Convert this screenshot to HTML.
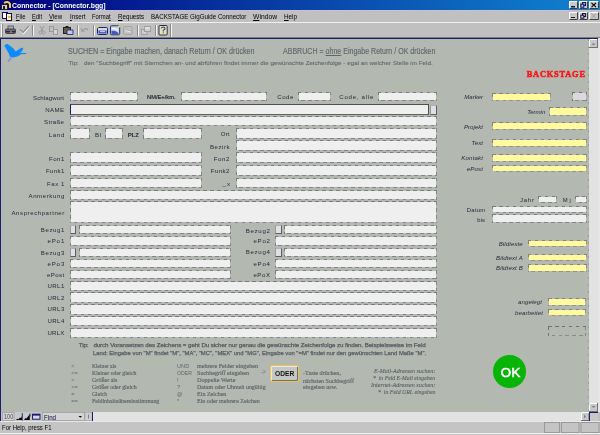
<!DOCTYPE html>
<html><head><meta charset="utf-8"><style>
html,body{margin:0;padding:0;width:600px;height:435px;overflow:hidden;background:#c0c0c0}
#w div{position:absolute}
#w{position:absolute;left:0;top:0;width:600px;height:435px;overflow:hidden;filter:blur(0.3px)}
u{text-underline-offset:0.5px}
</style></head><body><div id="w">
<div style="left:0px;top:0px;width:600px;height:435px;background:#c0c0c0"></div>
<div style="left:0px;top:0px;width:600px;height:10px;background:linear-gradient(90deg,#000080,#1084d0)"></div>
<div style="left:0px;top:10px;width:600px;height:1px;background:#c8c0d8"></div>
<div style="left:0px;top:22px;width:600px;height:1px;background:#f0f0f0"></div>
<div style="left:0px;top:37px;width:600px;height:1px;background:#808080"></div>
<div style="left:0px;top:38px;width:599px;height:1px;background:#1c1c6c"></div>
<div style="left:0px;top:38px;width:1px;height:383px;background:#1c1c6c"></div>
<div style="left:1px;top:39px;width:588px;height:373px;background:#b3b9b1"></div>
<div style="left:589px;top:39px;width:9px;height:373px;background:#e2e2e2"></div>
<div style="left:588px;top:39px;width:1px;height:373px;background:repeating-linear-gradient(180deg,#9a9e98 0 2px,transparent 2px 7px)"></div>
<div style="left:598px;top:38px;width:2px;height:374px;background:#e6e6e6"></div>
<div style="left:70px;top:92px;width:68px;height:9px;background:repeating-linear-gradient(90deg,#7a7a82 0 3.5px,transparent 3.5px 7px) 0 0/100% 1px no-repeat,repeating-linear-gradient(90deg,transparent 0 3.5px,#84848a 3.5px 7px) 0 100%/100% 1px no-repeat,repeating-linear-gradient(180deg,#7a7a82 0 3.5px,transparent 3.5px 7px) 0 0/1px 100% no-repeat,repeating-linear-gradient(180deg,#84848a 0 3.5px,transparent 3.5px 7px) 100% 0/1px 100% no-repeat,linear-gradient(#efefef,#efefef) 1px 1px/calc(100% - 2px) calc(100% - 2px) no-repeat"></div>
<div style="left:181px;top:92px;width:86px;height:9px;background:repeating-linear-gradient(90deg,#7a7a82 0 3.5px,transparent 3.5px 7px) 0 0/100% 1px no-repeat,repeating-linear-gradient(90deg,transparent 0 3.5px,#84848a 3.5px 7px) 0 100%/100% 1px no-repeat,repeating-linear-gradient(180deg,#7a7a82 0 3.5px,transparent 3.5px 7px) 0 0/1px 100% no-repeat,repeating-linear-gradient(180deg,#84848a 0 3.5px,transparent 3.5px 7px) 100% 0/1px 100% no-repeat,linear-gradient(#efefef,#efefef) 1px 1px/calc(100% - 2px) calc(100% - 2px) no-repeat"></div>
<div style="left:298px;top:92px;width:33px;height:9px;background:repeating-linear-gradient(90deg,#7a7a82 0 3.5px,transparent 3.5px 7px) 0 0/100% 1px no-repeat,repeating-linear-gradient(90deg,transparent 0 3.5px,#84848a 3.5px 7px) 0 100%/100% 1px no-repeat,repeating-linear-gradient(180deg,#7a7a82 0 3.5px,transparent 3.5px 7px) 0 0/1px 100% no-repeat,repeating-linear-gradient(180deg,#84848a 0 3.5px,transparent 3.5px 7px) 100% 0/1px 100% no-repeat,linear-gradient(#efefef,#efefef) 1px 1px/calc(100% - 2px) calc(100% - 2px) no-repeat"></div>
<div style="left:378px;top:92px;width:59px;height:9px;background:repeating-linear-gradient(90deg,#7a7a82 0 3.5px,transparent 3.5px 7px) 0 0/100% 1px no-repeat,repeating-linear-gradient(90deg,transparent 0 3.5px,#84848a 3.5px 7px) 0 100%/100% 1px no-repeat,repeating-linear-gradient(180deg,#7a7a82 0 3.5px,transparent 3.5px 7px) 0 0/1px 100% no-repeat,repeating-linear-gradient(180deg,#84848a 0 3.5px,transparent 3.5px 7px) 100% 0/1px 100% no-repeat,linear-gradient(#efefef,#efefef) 1px 1px/calc(100% - 2px) calc(100% - 2px) no-repeat"></div>
<div style="left:70px;top:104px;width:359px;height:11px;background:#efefef;border-top:1px solid #505050;border-left:1px solid #1a1a6a;border-bottom:1px solid #606060;border-right:1px solid #505050;box-sizing:border-box"></div>
<div style="left:430px;top:105px;width:7px;height:10px;background:#e2dee8;border-top:1px solid #b0b0b0;border-left:1px solid #9a9a9a;border-bottom:1px solid #606060;border-right:1px solid #606060;box-sizing:border-box"></div>
<div style="left:70px;top:116px;width:367px;height:10px;background:repeating-linear-gradient(90deg,#7a7a82 0 3.5px,transparent 3.5px 7px) 0 0/100% 1px no-repeat,repeating-linear-gradient(90deg,transparent 0 3.5px,#84848a 3.5px 7px) 0 100%/100% 1px no-repeat,repeating-linear-gradient(180deg,#7a7a82 0 3.5px,transparent 3.5px 7px) 0 0/1px 100% no-repeat,repeating-linear-gradient(180deg,#84848a 0 3.5px,transparent 3.5px 7px) 100% 0/1px 100% no-repeat,linear-gradient(#efefef,#efefef) 1px 1px/calc(100% - 2px) calc(100% - 2px) no-repeat"></div>
<div style="left:70px;top:128px;width:20px;height:11px;background:repeating-linear-gradient(90deg,#7a7a82 0 3.5px,transparent 3.5px 7px) 0 0/100% 1px no-repeat,repeating-linear-gradient(90deg,transparent 0 3.5px,#84848a 3.5px 7px) 0 100%/100% 1px no-repeat,repeating-linear-gradient(180deg,#7a7a82 0 3.5px,transparent 3.5px 7px) 0 0/1px 100% no-repeat,repeating-linear-gradient(180deg,#84848a 0 3.5px,transparent 3.5px 7px) 100% 0/1px 100% no-repeat,linear-gradient(#efefef,#efefef) 1px 1px/calc(100% - 2px) calc(100% - 2px) no-repeat"></div>
<div style="left:105px;top:128px;width:18px;height:11px;background:repeating-linear-gradient(90deg,#7a7a82 0 3.5px,transparent 3.5px 7px) 0 0/100% 1px no-repeat,repeating-linear-gradient(90deg,transparent 0 3.5px,#84848a 3.5px 7px) 0 100%/100% 1px no-repeat,repeating-linear-gradient(180deg,#7a7a82 0 3.5px,transparent 3.5px 7px) 0 0/1px 100% no-repeat,repeating-linear-gradient(180deg,#84848a 0 3.5px,transparent 3.5px 7px) 100% 0/1px 100% no-repeat,linear-gradient(#efefef,#efefef) 1px 1px/calc(100% - 2px) calc(100% - 2px) no-repeat"></div>
<div style="left:143px;top:128px;width:59px;height:11px;background:repeating-linear-gradient(90deg,#7a7a82 0 3.5px,transparent 3.5px 7px) 0 0/100% 1px no-repeat,repeating-linear-gradient(90deg,transparent 0 3.5px,#84848a 3.5px 7px) 0 100%/100% 1px no-repeat,repeating-linear-gradient(180deg,#7a7a82 0 3.5px,transparent 3.5px 7px) 0 0/1px 100% no-repeat,repeating-linear-gradient(180deg,#84848a 0 3.5px,transparent 3.5px 7px) 100% 0/1px 100% no-repeat,linear-gradient(#efefef,#efefef) 1px 1px/calc(100% - 2px) calc(100% - 2px) no-repeat"></div>
<div style="left:236px;top:128px;width:201px;height:11px;background:repeating-linear-gradient(90deg,#7a7a82 0 3.5px,transparent 3.5px 7px) 0 0/100% 1px no-repeat,repeating-linear-gradient(90deg,transparent 0 3.5px,#84848a 3.5px 7px) 0 100%/100% 1px no-repeat,repeating-linear-gradient(180deg,#7a7a82 0 3.5px,transparent 3.5px 7px) 0 0/1px 100% no-repeat,repeating-linear-gradient(180deg,#84848a 0 3.5px,transparent 3.5px 7px) 100% 0/1px 100% no-repeat,linear-gradient(#efefef,#efefef) 1px 1px/calc(100% - 2px) calc(100% - 2px) no-repeat"></div>
<div style="left:236px;top:140px;width:201px;height:11px;background:repeating-linear-gradient(90deg,#7a7a82 0 3.5px,transparent 3.5px 7px) 0 0/100% 1px no-repeat,repeating-linear-gradient(90deg,transparent 0 3.5px,#84848a 3.5px 7px) 0 100%/100% 1px no-repeat,repeating-linear-gradient(180deg,#7a7a82 0 3.5px,transparent 3.5px 7px) 0 0/1px 100% no-repeat,repeating-linear-gradient(180deg,#84848a 0 3.5px,transparent 3.5px 7px) 100% 0/1px 100% no-repeat,linear-gradient(#efefef,#efefef) 1px 1px/calc(100% - 2px) calc(100% - 2px) no-repeat"></div>
<div style="left:70px;top:152px;width:132px;height:11px;background:repeating-linear-gradient(90deg,#7a7a82 0 3.5px,transparent 3.5px 7px) 0 0/100% 1px no-repeat,repeating-linear-gradient(90deg,transparent 0 3.5px,#84848a 3.5px 7px) 0 100%/100% 1px no-repeat,repeating-linear-gradient(180deg,#7a7a82 0 3.5px,transparent 3.5px 7px) 0 0/1px 100% no-repeat,repeating-linear-gradient(180deg,#84848a 0 3.5px,transparent 3.5px 7px) 100% 0/1px 100% no-repeat,linear-gradient(#efefef,#efefef) 1px 1px/calc(100% - 2px) calc(100% - 2px) no-repeat"></div>
<div style="left:236px;top:152px;width:201px;height:11px;background:repeating-linear-gradient(90deg,#7a7a82 0 3.5px,transparent 3.5px 7px) 0 0/100% 1px no-repeat,repeating-linear-gradient(90deg,transparent 0 3.5px,#84848a 3.5px 7px) 0 100%/100% 1px no-repeat,repeating-linear-gradient(180deg,#7a7a82 0 3.5px,transparent 3.5px 7px) 0 0/1px 100% no-repeat,repeating-linear-gradient(180deg,#84848a 0 3.5px,transparent 3.5px 7px) 100% 0/1px 100% no-repeat,linear-gradient(#efefef,#efefef) 1px 1px/calc(100% - 2px) calc(100% - 2px) no-repeat"></div>
<div style="left:70px;top:165px;width:132px;height:11px;background:repeating-linear-gradient(90deg,#7a7a82 0 3.5px,transparent 3.5px 7px) 0 0/100% 1px no-repeat,repeating-linear-gradient(90deg,transparent 0 3.5px,#84848a 3.5px 7px) 0 100%/100% 1px no-repeat,repeating-linear-gradient(180deg,#7a7a82 0 3.5px,transparent 3.5px 7px) 0 0/1px 100% no-repeat,repeating-linear-gradient(180deg,#84848a 0 3.5px,transparent 3.5px 7px) 100% 0/1px 100% no-repeat,linear-gradient(#efefef,#efefef) 1px 1px/calc(100% - 2px) calc(100% - 2px) no-repeat"></div>
<div style="left:236px;top:165px;width:201px;height:11px;background:repeating-linear-gradient(90deg,#7a7a82 0 3.5px,transparent 3.5px 7px) 0 0/100% 1px no-repeat,repeating-linear-gradient(90deg,transparent 0 3.5px,#84848a 3.5px 7px) 0 100%/100% 1px no-repeat,repeating-linear-gradient(180deg,#7a7a82 0 3.5px,transparent 3.5px 7px) 0 0/1px 100% no-repeat,repeating-linear-gradient(180deg,#84848a 0 3.5px,transparent 3.5px 7px) 100% 0/1px 100% no-repeat,linear-gradient(#efefef,#efefef) 1px 1px/calc(100% - 2px) calc(100% - 2px) no-repeat"></div>
<div style="left:70px;top:178px;width:132px;height:10px;background:repeating-linear-gradient(90deg,#7a7a82 0 3.5px,transparent 3.5px 7px) 0 0/100% 1px no-repeat,repeating-linear-gradient(90deg,transparent 0 3.5px,#84848a 3.5px 7px) 0 100%/100% 1px no-repeat,repeating-linear-gradient(180deg,#7a7a82 0 3.5px,transparent 3.5px 7px) 0 0/1px 100% no-repeat,repeating-linear-gradient(180deg,#84848a 0 3.5px,transparent 3.5px 7px) 100% 0/1px 100% no-repeat,linear-gradient(#efefef,#efefef) 1px 1px/calc(100% - 2px) calc(100% - 2px) no-repeat"></div>
<div style="left:236px;top:178px;width:201px;height:10px;background:repeating-linear-gradient(90deg,#7a7a82 0 3.5px,transparent 3.5px 7px) 0 0/100% 1px no-repeat,repeating-linear-gradient(90deg,transparent 0 3.5px,#84848a 3.5px 7px) 0 100%/100% 1px no-repeat,repeating-linear-gradient(180deg,#7a7a82 0 3.5px,transparent 3.5px 7px) 0 0/1px 100% no-repeat,repeating-linear-gradient(180deg,#84848a 0 3.5px,transparent 3.5px 7px) 100% 0/1px 100% no-repeat,linear-gradient(#efefef,#efefef) 1px 1px/calc(100% - 2px) calc(100% - 2px) no-repeat"></div>
<div style="left:70px;top:190px;width:367px;height:10px;background:repeating-linear-gradient(90deg,#7a7a82 0 3.5px,transparent 3.5px 7px) 0 0/100% 1px no-repeat,repeating-linear-gradient(90deg,transparent 0 3.5px,#84848a 3.5px 7px) 0 100%/100% 1px no-repeat,repeating-linear-gradient(180deg,#7a7a82 0 3.5px,transparent 3.5px 7px) 0 0/1px 100% no-repeat,repeating-linear-gradient(180deg,#84848a 0 3.5px,transparent 3.5px 7px) 100% 0/1px 100% no-repeat,linear-gradient(#efefef,#efefef) 1px 1px/calc(100% - 2px) calc(100% - 2px) no-repeat"></div>
<div style="left:70px;top:201px;width:367px;height:22px;background:repeating-linear-gradient(90deg,#7a7a82 0 3.5px,transparent 3.5px 7px) 0 0/100% 1px no-repeat,repeating-linear-gradient(90deg,transparent 0 3.5px,#84848a 3.5px 7px) 0 100%/100% 1px no-repeat,repeating-linear-gradient(180deg,#7a7a82 0 3.5px,transparent 3.5px 7px) 0 0/1px 100% no-repeat,repeating-linear-gradient(180deg,#84848a 0 3.5px,transparent 3.5px 7px) 100% 0/1px 100% no-repeat,linear-gradient(#efefef,#efefef) 1px 1px/calc(100% - 2px) calc(100% - 2px) no-repeat"></div>
<div style="left:70px;top:225px;width:6px;height:9px;background:#e2dee8;border-top:1px solid #b0b0b0;border-left:1px solid #9a9a9a;border-bottom:1px solid #606060;border-right:1px solid #606060;box-sizing:border-box"></div>
<div style="left:79px;top:225px;width:152px;height:9px;background:repeating-linear-gradient(90deg,#7a7a82 0 3.5px,transparent 3.5px 7px) 0 0/100% 1px no-repeat,repeating-linear-gradient(90deg,transparent 0 3.5px,#84848a 3.5px 7px) 0 100%/100% 1px no-repeat,repeating-linear-gradient(180deg,#7a7a82 0 3.5px,transparent 3.5px 7px) 0 0/1px 100% no-repeat,repeating-linear-gradient(180deg,#84848a 0 3.5px,transparent 3.5px 7px) 100% 0/1px 100% no-repeat,linear-gradient(#efefef,#efefef) 1px 1px/calc(100% - 2px) calc(100% - 2px) no-repeat"></div>
<div style="left:275px;top:225px;width:7px;height:9px;background:#e2dee8;border-top:1px solid #b0b0b0;border-left:1px solid #9a9a9a;border-bottom:1px solid #606060;border-right:1px solid #606060;box-sizing:border-box"></div>
<div style="left:284px;top:225px;width:153px;height:9px;background:repeating-linear-gradient(90deg,#7a7a82 0 3.5px,transparent 3.5px 7px) 0 0/100% 1px no-repeat,repeating-linear-gradient(90deg,transparent 0 3.5px,#84848a 3.5px 7px) 0 100%/100% 1px no-repeat,repeating-linear-gradient(180deg,#7a7a82 0 3.5px,transparent 3.5px 7px) 0 0/1px 100% no-repeat,repeating-linear-gradient(180deg,#84848a 0 3.5px,transparent 3.5px 7px) 100% 0/1px 100% no-repeat,linear-gradient(#efefef,#efefef) 1px 1px/calc(100% - 2px) calc(100% - 2px) no-repeat"></div>
<div style="left:70px;top:248px;width:6px;height:9px;background:#e2dee8;border-top:1px solid #b0b0b0;border-left:1px solid #9a9a9a;border-bottom:1px solid #606060;border-right:1px solid #606060;box-sizing:border-box"></div>
<div style="left:79px;top:248px;width:152px;height:9px;background:repeating-linear-gradient(90deg,#7a7a82 0 3.5px,transparent 3.5px 7px) 0 0/100% 1px no-repeat,repeating-linear-gradient(90deg,transparent 0 3.5px,#84848a 3.5px 7px) 0 100%/100% 1px no-repeat,repeating-linear-gradient(180deg,#7a7a82 0 3.5px,transparent 3.5px 7px) 0 0/1px 100% no-repeat,repeating-linear-gradient(180deg,#84848a 0 3.5px,transparent 3.5px 7px) 100% 0/1px 100% no-repeat,linear-gradient(#efefef,#efefef) 1px 1px/calc(100% - 2px) calc(100% - 2px) no-repeat"></div>
<div style="left:275px;top:248px;width:7px;height:9px;background:#e2dee8;border-top:1px solid #b0b0b0;border-left:1px solid #9a9a9a;border-bottom:1px solid #606060;border-right:1px solid #606060;box-sizing:border-box"></div>
<div style="left:284px;top:248px;width:153px;height:9px;background:repeating-linear-gradient(90deg,#7a7a82 0 3.5px,transparent 3.5px 7px) 0 0/100% 1px no-repeat,repeating-linear-gradient(90deg,transparent 0 3.5px,#84848a 3.5px 7px) 0 100%/100% 1px no-repeat,repeating-linear-gradient(180deg,#7a7a82 0 3.5px,transparent 3.5px 7px) 0 0/1px 100% no-repeat,repeating-linear-gradient(180deg,#84848a 0 3.5px,transparent 3.5px 7px) 100% 0/1px 100% no-repeat,linear-gradient(#efefef,#efefef) 1px 1px/calc(100% - 2px) calc(100% - 2px) no-repeat"></div>
<div style="left:70px;top:236px;width:161px;height:10px;background:repeating-linear-gradient(90deg,#7a7a82 0 3.5px,transparent 3.5px 7px) 0 0/100% 1px no-repeat,repeating-linear-gradient(90deg,transparent 0 3.5px,#84848a 3.5px 7px) 0 100%/100% 1px no-repeat,repeating-linear-gradient(180deg,#7a7a82 0 3.5px,transparent 3.5px 7px) 0 0/1px 100% no-repeat,repeating-linear-gradient(180deg,#84848a 0 3.5px,transparent 3.5px 7px) 100% 0/1px 100% no-repeat,linear-gradient(#efefef,#efefef) 1px 1px/calc(100% - 2px) calc(100% - 2px) no-repeat"></div>
<div style="left:275px;top:236px;width:162px;height:10px;background:repeating-linear-gradient(90deg,#7a7a82 0 3.5px,transparent 3.5px 7px) 0 0/100% 1px no-repeat,repeating-linear-gradient(90deg,transparent 0 3.5px,#84848a 3.5px 7px) 0 100%/100% 1px no-repeat,repeating-linear-gradient(180deg,#7a7a82 0 3.5px,transparent 3.5px 7px) 0 0/1px 100% no-repeat,repeating-linear-gradient(180deg,#84848a 0 3.5px,transparent 3.5px 7px) 100% 0/1px 100% no-repeat,linear-gradient(#efefef,#efefef) 1px 1px/calc(100% - 2px) calc(100% - 2px) no-repeat"></div>
<div style="left:70px;top:259px;width:161px;height:9px;background:repeating-linear-gradient(90deg,#7a7a82 0 3.5px,transparent 3.5px 7px) 0 0/100% 1px no-repeat,repeating-linear-gradient(90deg,transparent 0 3.5px,#84848a 3.5px 7px) 0 100%/100% 1px no-repeat,repeating-linear-gradient(180deg,#7a7a82 0 3.5px,transparent 3.5px 7px) 0 0/1px 100% no-repeat,repeating-linear-gradient(180deg,#84848a 0 3.5px,transparent 3.5px 7px) 100% 0/1px 100% no-repeat,linear-gradient(#efefef,#efefef) 1px 1px/calc(100% - 2px) calc(100% - 2px) no-repeat"></div>
<div style="left:275px;top:259px;width:162px;height:9px;background:repeating-linear-gradient(90deg,#7a7a82 0 3.5px,transparent 3.5px 7px) 0 0/100% 1px no-repeat,repeating-linear-gradient(90deg,transparent 0 3.5px,#84848a 3.5px 7px) 0 100%/100% 1px no-repeat,repeating-linear-gradient(180deg,#7a7a82 0 3.5px,transparent 3.5px 7px) 0 0/1px 100% no-repeat,repeating-linear-gradient(180deg,#84848a 0 3.5px,transparent 3.5px 7px) 100% 0/1px 100% no-repeat,linear-gradient(#efefef,#efefef) 1px 1px/calc(100% - 2px) calc(100% - 2px) no-repeat"></div>
<div style="left:70px;top:270px;width:161px;height:9px;background:repeating-linear-gradient(90deg,#7a7a82 0 3.5px,transparent 3.5px 7px) 0 0/100% 1px no-repeat,repeating-linear-gradient(90deg,transparent 0 3.5px,#84848a 3.5px 7px) 0 100%/100% 1px no-repeat,repeating-linear-gradient(180deg,#7a7a82 0 3.5px,transparent 3.5px 7px) 0 0/1px 100% no-repeat,repeating-linear-gradient(180deg,#84848a 0 3.5px,transparent 3.5px 7px) 100% 0/1px 100% no-repeat,linear-gradient(#efefef,#efefef) 1px 1px/calc(100% - 2px) calc(100% - 2px) no-repeat"></div>
<div style="left:275px;top:270px;width:162px;height:9px;background:repeating-linear-gradient(90deg,#7a7a82 0 3.5px,transparent 3.5px 7px) 0 0/100% 1px no-repeat,repeating-linear-gradient(90deg,transparent 0 3.5px,#84848a 3.5px 7px) 0 100%/100% 1px no-repeat,repeating-linear-gradient(180deg,#7a7a82 0 3.5px,transparent 3.5px 7px) 0 0/1px 100% no-repeat,repeating-linear-gradient(180deg,#84848a 0 3.5px,transparent 3.5px 7px) 100% 0/1px 100% no-repeat,linear-gradient(#efefef,#efefef) 1px 1px/calc(100% - 2px) calc(100% - 2px) no-repeat"></div>
<div style="left:70px;top:281px;width:367px;height:10px;background:repeating-linear-gradient(90deg,#7a7a82 0 3.5px,transparent 3.5px 7px) 0 0/100% 1px no-repeat,repeating-linear-gradient(90deg,transparent 0 3.5px,#84848a 3.5px 7px) 0 100%/100% 1px no-repeat,repeating-linear-gradient(180deg,#7a7a82 0 3.5px,transparent 3.5px 7px) 0 0/1px 100% no-repeat,repeating-linear-gradient(180deg,#84848a 0 3.5px,transparent 3.5px 7px) 100% 0/1px 100% no-repeat,linear-gradient(#efefef,#efefef) 1px 1px/calc(100% - 2px) calc(100% - 2px) no-repeat"></div>
<div style="left:70px;top:292px;width:367px;height:11px;background:repeating-linear-gradient(90deg,#7a7a82 0 3.5px,transparent 3.5px 7px) 0 0/100% 1px no-repeat,repeating-linear-gradient(90deg,transparent 0 3.5px,#84848a 3.5px 7px) 0 100%/100% 1px no-repeat,repeating-linear-gradient(180deg,#7a7a82 0 3.5px,transparent 3.5px 7px) 0 0/1px 100% no-repeat,repeating-linear-gradient(180deg,#84848a 0 3.5px,transparent 3.5px 7px) 100% 0/1px 100% no-repeat,linear-gradient(#efefef,#efefef) 1px 1px/calc(100% - 2px) calc(100% - 2px) no-repeat"></div>
<div style="left:70px;top:304px;width:367px;height:11px;background:repeating-linear-gradient(90deg,#7a7a82 0 3.5px,transparent 3.5px 7px) 0 0/100% 1px no-repeat,repeating-linear-gradient(90deg,transparent 0 3.5px,#84848a 3.5px 7px) 0 100%/100% 1px no-repeat,repeating-linear-gradient(180deg,#7a7a82 0 3.5px,transparent 3.5px 7px) 0 0/1px 100% no-repeat,repeating-linear-gradient(180deg,#84848a 0 3.5px,transparent 3.5px 7px) 100% 0/1px 100% no-repeat,linear-gradient(#efefef,#efefef) 1px 1px/calc(100% - 2px) calc(100% - 2px) no-repeat"></div>
<div style="left:70px;top:316px;width:367px;height:10px;background:repeating-linear-gradient(90deg,#7a7a82 0 3.5px,transparent 3.5px 7px) 0 0/100% 1px no-repeat,repeating-linear-gradient(90deg,transparent 0 3.5px,#84848a 3.5px 7px) 0 100%/100% 1px no-repeat,repeating-linear-gradient(180deg,#7a7a82 0 3.5px,transparent 3.5px 7px) 0 0/1px 100% no-repeat,repeating-linear-gradient(180deg,#84848a 0 3.5px,transparent 3.5px 7px) 100% 0/1px 100% no-repeat,linear-gradient(#efefef,#efefef) 1px 1px/calc(100% - 2px) calc(100% - 2px) no-repeat"></div>
<div style="left:70px;top:328px;width:367px;height:10px;background:repeating-linear-gradient(90deg,#7a7a82 0 3.5px,transparent 3.5px 7px) 0 0/100% 1px no-repeat,repeating-linear-gradient(90deg,transparent 0 3.5px,#84848a 3.5px 7px) 0 100%/100% 1px no-repeat,repeating-linear-gradient(180deg,#7a7a82 0 3.5px,transparent 3.5px 7px) 0 0/1px 100% no-repeat,repeating-linear-gradient(180deg,#84848a 0 3.5px,transparent 3.5px 7px) 100% 0/1px 100% no-repeat,linear-gradient(#efefef,#efefef) 1px 1px/calc(100% - 2px) calc(100% - 2px) no-repeat"></div>
<div style="left:492px;top:93px;width:59px;height:8px;background:repeating-linear-gradient(90deg,#84827a 0 3.5px,transparent 3.5px 7px) 0 0/100% 1px no-repeat,repeating-linear-gradient(90deg,transparent 0 3.5px,#94928a 3.5px 7px) 0 100%/100% 1px no-repeat,repeating-linear-gradient(180deg,#84827a 0 3.5px,transparent 3.5px 7px) 0 0/1px 100% no-repeat,repeating-linear-gradient(180deg,#94928a 0 3.5px,transparent 3.5px 7px) 100% 0/1px 100% no-repeat,linear-gradient(#fffa9e,#fffa9e) 1px 1px/calc(100% - 2px) calc(100% - 2px) no-repeat"></div>
<div style="left:572px;top:92px;width:15px;height:9px;background:repeating-linear-gradient(90deg,#727272 0 3.5px,transparent 3.5px 7px) 0 0/100% 1px no-repeat,repeating-linear-gradient(90deg,transparent 0 3.5px,#8a8a8a 3.5px 7px) 0 100%/100% 1px no-repeat,repeating-linear-gradient(180deg,#727272 0 3.5px,transparent 3.5px 7px) 0 0/1px 100% no-repeat,repeating-linear-gradient(180deg,#8a8a8a 0 3.5px,transparent 3.5px 7px) 100% 0/1px 100% no-repeat,linear-gradient(#ddd8e0,#ddd8e0) 1px 1px/calc(100% - 2px) calc(100% - 2px) no-repeat"></div>
<div style="left:549px;top:107px;width:38px;height:9px;background:repeating-linear-gradient(90deg,#84827a 0 3.5px,transparent 3.5px 7px) 0 0/100% 1px no-repeat,repeating-linear-gradient(90deg,transparent 0 3.5px,#94928a 3.5px 7px) 0 100%/100% 1px no-repeat,repeating-linear-gradient(180deg,#84827a 0 3.5px,transparent 3.5px 7px) 0 0/1px 100% no-repeat,repeating-linear-gradient(180deg,#94928a 0 3.5px,transparent 3.5px 7px) 100% 0/1px 100% no-repeat,linear-gradient(#fffa9e,#fffa9e) 1px 1px/calc(100% - 2px) calc(100% - 2px) no-repeat"></div>
<div style="left:492px;top:122px;width:95px;height:8px;background:repeating-linear-gradient(90deg,#84827a 0 3.5px,transparent 3.5px 7px) 0 0/100% 1px no-repeat,repeating-linear-gradient(90deg,transparent 0 3.5px,#94928a 3.5px 7px) 0 100%/100% 1px no-repeat,repeating-linear-gradient(180deg,#84827a 0 3.5px,transparent 3.5px 7px) 0 0/1px 100% no-repeat,repeating-linear-gradient(180deg,#94928a 0 3.5px,transparent 3.5px 7px) 100% 0/1px 100% no-repeat,linear-gradient(#fffa9e,#fffa9e) 1px 1px/calc(100% - 2px) calc(100% - 2px) no-repeat"></div>
<div style="left:492px;top:139px;width:95px;height:8px;background:repeating-linear-gradient(90deg,#84827a 0 3.5px,transparent 3.5px 7px) 0 0/100% 1px no-repeat,repeating-linear-gradient(90deg,transparent 0 3.5px,#94928a 3.5px 7px) 0 100%/100% 1px no-repeat,repeating-linear-gradient(180deg,#84827a 0 3.5px,transparent 3.5px 7px) 0 0/1px 100% no-repeat,repeating-linear-gradient(180deg,#94928a 0 3.5px,transparent 3.5px 7px) 100% 0/1px 100% no-repeat,linear-gradient(#fffa9e,#fffa9e) 1px 1px/calc(100% - 2px) calc(100% - 2px) no-repeat"></div>
<div style="left:492px;top:154px;width:95px;height:8px;background:repeating-linear-gradient(90deg,#84827a 0 3.5px,transparent 3.5px 7px) 0 0/100% 1px no-repeat,repeating-linear-gradient(90deg,transparent 0 3.5px,#94928a 3.5px 7px) 0 100%/100% 1px no-repeat,repeating-linear-gradient(180deg,#84827a 0 3.5px,transparent 3.5px 7px) 0 0/1px 100% no-repeat,repeating-linear-gradient(180deg,#94928a 0 3.5px,transparent 3.5px 7px) 100% 0/1px 100% no-repeat,linear-gradient(#fffa9e,#fffa9e) 1px 1px/calc(100% - 2px) calc(100% - 2px) no-repeat"></div>
<div style="left:492px;top:165px;width:95px;height:7px;background:repeating-linear-gradient(90deg,#84827a 0 3.5px,transparent 3.5px 7px) 0 0/100% 1px no-repeat,repeating-linear-gradient(90deg,transparent 0 3.5px,#94928a 3.5px 7px) 0 100%/100% 1px no-repeat,repeating-linear-gradient(180deg,#84827a 0 3.5px,transparent 3.5px 7px) 0 0/1px 100% no-repeat,repeating-linear-gradient(180deg,#94928a 0 3.5px,transparent 3.5px 7px) 100% 0/1px 100% no-repeat,linear-gradient(#fffa9e,#fffa9e) 1px 1px/calc(100% - 2px) calc(100% - 2px) no-repeat"></div>
<div style="left:538px;top:196px;width:19px;height:7px;background:repeating-linear-gradient(90deg,#7a7a82 0 3.5px,transparent 3.5px 7px) 0 0/100% 1px no-repeat,repeating-linear-gradient(90deg,transparent 0 3.5px,#84848a 3.5px 7px) 0 100%/100% 1px no-repeat,repeating-linear-gradient(180deg,#7a7a82 0 3.5px,transparent 3.5px 7px) 0 0/1px 100% no-repeat,repeating-linear-gradient(180deg,#84848a 0 3.5px,transparent 3.5px 7px) 100% 0/1px 100% no-repeat,linear-gradient(#efefef,#efefef) 1px 1px/calc(100% - 2px) calc(100% - 2px) no-repeat"></div>
<div style="left:575px;top:196px;width:12px;height:7px;background:repeating-linear-gradient(90deg,#7a7a82 0 3.5px,transparent 3.5px 7px) 0 0/100% 1px no-repeat,repeating-linear-gradient(90deg,transparent 0 3.5px,#84848a 3.5px 7px) 0 100%/100% 1px no-repeat,repeating-linear-gradient(180deg,#7a7a82 0 3.5px,transparent 3.5px 7px) 0 0/1px 100% no-repeat,repeating-linear-gradient(180deg,#84848a 0 3.5px,transparent 3.5px 7px) 100% 0/1px 100% no-repeat,linear-gradient(#efefef,#efefef) 1px 1px/calc(100% - 2px) calc(100% - 2px) no-repeat"></div>
<div style="left:492px;top:206px;width:95px;height:7px;background:repeating-linear-gradient(90deg,#7a7a82 0 3.5px,transparent 3.5px 7px) 0 0/100% 1px no-repeat,repeating-linear-gradient(90deg,transparent 0 3.5px,#84848a 3.5px 7px) 0 100%/100% 1px no-repeat,repeating-linear-gradient(180deg,#7a7a82 0 3.5px,transparent 3.5px 7px) 0 0/1px 100% no-repeat,repeating-linear-gradient(180deg,#84848a 0 3.5px,transparent 3.5px 7px) 100% 0/1px 100% no-repeat,linear-gradient(#efefef,#efefef) 1px 1px/calc(100% - 2px) calc(100% - 2px) no-repeat"></div>
<div style="left:492px;top:214px;width:95px;height:9px;background:repeating-linear-gradient(90deg,#7a7a82 0 3.5px,transparent 3.5px 7px) 0 0/100% 1px no-repeat,repeating-linear-gradient(90deg,transparent 0 3.5px,#84848a 3.5px 7px) 0 100%/100% 1px no-repeat,repeating-linear-gradient(180deg,#7a7a82 0 3.5px,transparent 3.5px 7px) 0 0/1px 100% no-repeat,repeating-linear-gradient(180deg,#84848a 0 3.5px,transparent 3.5px 7px) 100% 0/1px 100% no-repeat,linear-gradient(#efefef,#efefef) 1px 1px/calc(100% - 2px) calc(100% - 2px) no-repeat"></div>
<div style="left:528px;top:240px;width:59px;height:7px;background:repeating-linear-gradient(90deg,#84827a 0 3.5px,transparent 3.5px 7px) 0 0/100% 1px no-repeat,repeating-linear-gradient(90deg,transparent 0 3.5px,#94928a 3.5px 7px) 0 100%/100% 1px no-repeat,repeating-linear-gradient(180deg,#84827a 0 3.5px,transparent 3.5px 7px) 0 0/1px 100% no-repeat,repeating-linear-gradient(180deg,#94928a 0 3.5px,transparent 3.5px 7px) 100% 0/1px 100% no-repeat,linear-gradient(#fffa9e,#fffa9e) 1px 1px/calc(100% - 2px) calc(100% - 2px) no-repeat"></div>
<div style="left:528px;top:254px;width:59px;height:7px;background:repeating-linear-gradient(90deg,#84827a 0 3.5px,transparent 3.5px 7px) 0 0/100% 1px no-repeat,repeating-linear-gradient(90deg,transparent 0 3.5px,#94928a 3.5px 7px) 0 100%/100% 1px no-repeat,repeating-linear-gradient(180deg,#84827a 0 3.5px,transparent 3.5px 7px) 0 0/1px 100% no-repeat,repeating-linear-gradient(180deg,#94928a 0 3.5px,transparent 3.5px 7px) 100% 0/1px 100% no-repeat,linear-gradient(#fffa9e,#fffa9e) 1px 1px/calc(100% - 2px) calc(100% - 2px) no-repeat"></div>
<div style="left:528px;top:264px;width:59px;height:8px;background:repeating-linear-gradient(90deg,#84827a 0 3.5px,transparent 3.5px 7px) 0 0/100% 1px no-repeat,repeating-linear-gradient(90deg,transparent 0 3.5px,#94928a 3.5px 7px) 0 100%/100% 1px no-repeat,repeating-linear-gradient(180deg,#84827a 0 3.5px,transparent 3.5px 7px) 0 0/1px 100% no-repeat,repeating-linear-gradient(180deg,#94928a 0 3.5px,transparent 3.5px 7px) 100% 0/1px 100% no-repeat,linear-gradient(#fffa9e,#fffa9e) 1px 1px/calc(100% - 2px) calc(100% - 2px) no-repeat"></div>
<div style="left:548px;top:298px;width:38px;height:8px;background:repeating-linear-gradient(90deg,#84827a 0 3.5px,transparent 3.5px 7px) 0 0/100% 1px no-repeat,repeating-linear-gradient(90deg,transparent 0 3.5px,#94928a 3.5px 7px) 0 100%/100% 1px no-repeat,repeating-linear-gradient(180deg,#84827a 0 3.5px,transparent 3.5px 7px) 0 0/1px 100% no-repeat,repeating-linear-gradient(180deg,#94928a 0 3.5px,transparent 3.5px 7px) 100% 0/1px 100% no-repeat,linear-gradient(#fffa9e,#fffa9e) 1px 1px/calc(100% - 2px) calc(100% - 2px) no-repeat"></div>
<div style="left:548px;top:309px;width:38px;height:7px;background:repeating-linear-gradient(90deg,#84827a 0 3.5px,transparent 3.5px 7px) 0 0/100% 1px no-repeat,repeating-linear-gradient(90deg,transparent 0 3.5px,#94928a 3.5px 7px) 0 100%/100% 1px no-repeat,repeating-linear-gradient(180deg,#84827a 0 3.5px,transparent 3.5px 7px) 0 0/1px 100% no-repeat,repeating-linear-gradient(180deg,#94928a 0 3.5px,transparent 3.5px 7px) 100% 0/1px 100% no-repeat,linear-gradient(#fffa9e,#fffa9e) 1px 1px/calc(100% - 2px) calc(100% - 2px) no-repeat"></div>
<div style="left:548px;top:326px;width:38px;height:10px;background:repeating-linear-gradient(90deg,#727272 0 3.5px,transparent 3.5px 7px) 0 0/100% 1px no-repeat,repeating-linear-gradient(90deg,transparent 0 3.5px,#8a8a8a 3.5px 7px) 0 100%/100% 1px no-repeat,repeating-linear-gradient(180deg,#727272 0 3.5px,transparent 3.5px 7px) 0 0/1px 100% no-repeat,repeating-linear-gradient(180deg,#8a8a8a 0 3.5px,transparent 3.5px 7px) 100% 0/1px 100% no-repeat"></div>
<div style="left:493.3px;top:355px;width:32.6px;height:32.8px;border-radius:50%;background:#08b408"></div>
<div style="left:270px;top:365px;width:29px;height:17px;box-sizing:border-box;border:1px solid #f2c24a;border-radius:2px;background:#c4c8c4;box-shadow:inset 1px 1px 0 #e8e8e8, inset -1px -1px 0 #707070"></div>
<svg width="600" height="435" style="position:absolute;left:0;top:0">
<!-- title icon -->
<rect x="1.5" y="4.5" width="6" height="5" fill="#d0d0c8" stroke="#202020" stroke-width="1"/>
<rect x="3" y="6" width="2" height="3" fill="#202020"/>
<path d="M4 3 Q8 0.5 10 4 L10 8" stroke="#f0d040" stroke-width="2" fill="none"/>
<!-- menu icon -->
<rect x="2.5" y="12.5" width="5" height="6" fill="#f8f8f8" stroke="#101050" stroke-width="1"/>
<rect x="6.5" y="13.5" width="5" height="7" fill="#f0f0f0" stroke="#101030" stroke-width="1"/>
<rect x="8" y="16" width="3" height="2" fill="#e8c030"/>
<!-- toolbar grip -->
<rect x="1" y="24" width="1" height="13" fill="#f4f4f4"/>
<rect x="2" y="24" width="1" height="13" fill="#909090"/>
<!-- printer -->
<rect x="8" y="26" width="5.5" height="3.5" fill="#b0b0b0" stroke="#505050" stroke-width="0.8"/>
<rect x="5.5" y="29" width="10" height="4.5" rx="1" fill="#707070" stroke="#303030" stroke-width="0.8"/>
<rect x="6" y="31" width="9" height="1.3" fill="#202060"/>
<rect x="10" y="31.5" width="2" height="1" fill="#d0c020"/>
<!-- check (grey) -->
<path d="M20.5 30.5 L23.5 33.5 L29.5 26.5" stroke="#f4f4f4" stroke-width="1.3" fill="none"/>
<path d="M20 29.5 L23 32.5 L29 26" stroke="#8a8a8a" stroke-width="1.2" fill="none"/>
<!-- separators -->
<g fill="#8a8a8a"><rect x="32" y="25" width="1" height="11"/><rect x="77" y="25" width="1" height="11"/><rect x="93" y="25" width="1" height="11"/><rect x="137" y="25" width="1" height="11"/><rect x="155" y="25" width="1" height="11"/><rect x="170" y="24" width="1" height="13"/></g>
<g fill="#f4f4f4"><rect x="33" y="25" width="1" height="11"/><rect x="78" y="25" width="1" height="11"/><rect x="94" y="25" width="1" height="11"/><rect x="138" y="25" width="1" height="11"/><rect x="156" y="25" width="1" height="11"/><rect x="171" y="24" width="1" height="13"/></g>
<!-- scissors grey -->
<path d="M40 26 L43 31 M44 26 L41 31" stroke="#9a9a9a" stroke-width="1" fill="none"/>
<circle cx="40.5" cy="32.5" r="1.5" stroke="#9a9a9a" fill="none" stroke-width="0.9"/>
<circle cx="43.5" cy="32.5" r="1.5" stroke="#9a9a9a" fill="none" stroke-width="0.9"/>
<!-- copy grey -->
<rect x="49.5" y="26.5" width="4" height="5" fill="none" stroke="#9a9a9a" stroke-width="1"/>
<rect x="53.5" y="29.5" width="4" height="5" fill="#d4d4d4" stroke="#9a9a9a" stroke-width="1"/>
<!-- paste -->
<rect x="63.5" y="27.5" width="7" height="6" fill="#606040" stroke="#202020" stroke-width="1"/>
<rect x="65.5" y="26" width="3" height="2" fill="#202020"/>
<path d="M67 30 L73 30 L73 34.5 L67 34.5 Z" fill="#b8c8f0" stroke="#202060" stroke-width="0.8"/>
<!-- undo grey -->
<path d="M82 31 Q85 27 88 30" stroke="#9a9a9a" stroke-width="1.2" fill="none"/>
<path d="M81 28 L82 31.5 L85 31" stroke="#9a9a9a" stroke-width="1" fill="none"/>
<!-- icon 1 -->
<rect x="97.5" y="27.5" width="10" height="7" rx="1" fill="#d8dce8" stroke="#1c2070" stroke-width="1"/>
<rect x="98.5" y="30.5" width="8" height="3" fill="#3850b0"/>
<rect x="100" y="31" width="5" height="1.2" fill="#c8d0f0"/>
<circle cx="97.5" cy="26.8" r="1" fill="#f0e040"/>
<!-- icon 2 -->
<rect x="110.5" y="25.8" width="9.2" height="9" rx="1.2" fill="#c8d4f0" stroke="#283060" stroke-width="1"/>
<path d="M111.5 31 Q115 30 118.5 33 L118.5 34.3 L111.5 34.3 Z" fill="#4058b8"/>
<path d="M112 28.5 Q115 28 118 30" stroke="#ffffff" stroke-width="1" fill="none"/>
<circle cx="119" cy="26.5" r="1.1" fill="#f0e040"/>
<!-- icon 3 grey -->
<rect x="123.5" y="26.5" width="8.5" height="8" rx="1" fill="none" stroke="#a4a4a4" stroke-width="1"/>
<path d="M125 30 Q127.5 31.5 131 32" stroke="#f0f0f0" stroke-width="1" fill="none"/>
<path d="M125 29 Q127.5 30.5 131 31" stroke="#a8a8a8" stroke-width="0.8" fill="none"/>
<!-- icon 4 grey -->
<rect x="141.5" y="29.5" width="5.5" height="5" fill="#d0d0d0" stroke="#a0a0a0" stroke-width="1"/>
<rect x="144.5" y="26.5" width="6" height="5" fill="#d0d0d0" stroke="#a0a0a0" stroke-width="1"/>
<path d="M145 28 L150 28" stroke="#f0f0f0" stroke-width="1"/>
<!-- help icon -->
<rect x="159" y="25.5" width="8.2" height="9.5" rx="1" fill="#e8e4b0" stroke="#303040" stroke-width="1"/>
<path d="M161.5 28.5 Q161.5 27 163.2 27 Q165 27 165 28.5 Q165 29.6 163.3 30.3 L163.3 31.5" stroke="#2838a0" stroke-width="1.1" fill="none"/>
<rect x="162.8" y="32.3" width="1" height="1" fill="#2838a0"/>
<!-- vertical scrollbar buttons -->
<rect x="589.5" y="39.5" width="8" height="8" fill="#c8c8c8" stroke="#707070" stroke-width="1"/>
<path d="M589.5 47 L589.5 39.5 L597 39.5" stroke="#ffffff" stroke-width="1" fill="none"/>
<path d="M591.5 45 L593.5 43 L595.5 45 Z" fill="#808080"/>
<rect x="589.5" y="403.5" width="8" height="8" fill="#c8c8c8" stroke="#707070" stroke-width="1"/>
<path d="M589.5 411 L589.5 403.5 L597 403.5" stroke="#ffffff" stroke-width="1" fill="none"/>
<path d="M591.5 406 L593.5 408 L595.5 406 Z" fill="#808080"/>
<!-- bottom toolbar row -->
<rect x="1" y="412" width="92" height="9" fill="#c4c4c4"/>
<rect x="2.5" y="412.5" width="11.5" height="8" fill="#d4d4d4" stroke="#a8a8a8" stroke-width="1"/>
<rect x="15" y="412.5" width="7.5" height="8" fill="#c8c8c8"/>
<path d="M15.8 420 L17.5 418.8 L18.5 419.2 L20 417.6 L21 418 L22 416 L22 420 Z" fill="#080808"/>
<rect x="21.8" y="413" width="0.9" height="7.5" fill="#1c1c7c"/>
<rect x="23.5" y="412.5" width="7" height="8" fill="#c8c8c8"/>
<path d="M24 420 L25.5 418 L26.5 418.6 L28 416.5 L29.8 414.2 L29.8 420 Z" fill="#080808"/>
<rect x="29.5" y="413.5" width="1" height="3" fill="#1c1c7c"/>
<rect x="31" y="412.5" width="10" height="8" fill="#c8c8c8"/>
<rect x="32.5" y="414.2" width="7.5" height="5" fill="#d8d8e0" stroke="#1c1c70" stroke-width="1"/>
<rect x="32.5" y="414" width="7.5" height="1.6" fill="#1c1c70"/>
<rect x="42.5" y="412.5" width="42" height="8" fill="#d4d4d4" stroke="#a0a0a0" stroke-width="0.8"/>
<path d="M78.5 416 L82 416 L80.25 417.8 Z" fill="#000"/>
<rect x="85" y="412.5" width="7" height="8" fill="#d0d0d0" stroke="#a0a0a0" stroke-width="0.6"/>
<rect x="88" y="414.5" width="1" height="4" fill="#808080"/>
<rect x="92" y="412" width="1.2" height="9" fill="#1c1c6c"/>
<!-- horizontal scrollbar -->
<rect x="93" y="412" width="496" height="9" fill="#e2e2e2"/>
<rect x="581.5" y="412.5" width="7.5" height="8" fill="#c8c8c8" stroke="#707070" stroke-width="1"/>
<path d="M581.5 420 L581.5 412.5 L589 412.5" stroke="#ffffff" stroke-width="1" fill="none"/>
<path d="M584 414.5 L586 416.5 L584 418.5 Z" fill="#808080"/>
<rect x="589" y="412" width="9" height="9" fill="#c8c8c8"/>
<rect x="589" y="412" width="9" height="1" fill="#1c1c6c"/>
<rect x="589" y="412" width="1" height="9" fill="#1c1c6c"/>
<!-- status bar -->
<rect x="0" y="421" width="600" height="14" fill="#c4c4c4"/>
<rect x="0" y="421" width="600" height="1" fill="#e8e8e8"/>
<rect x="0" y="433" width="600" height="1" fill="#f0f0f0"/>
<rect x="544.5" y="422.5" width="15" height="10" fill="none" stroke="#9a9a9a" stroke-width="1"/>
<rect x="561.5" y="422.5" width="17.5" height="10" fill="none" stroke="#9a9a9a" stroke-width="1"/>
<rect x="581" y="422.5" width="18" height="10" fill="none" stroke="#9a9a9a" stroke-width="1"/>
<!-- bird logo -->
<path d="M4.3 45.6 L7 43.8 L10 45.8 L13.5 48.4 L15.8 51.6 L20.5 48.2 L22.3 47.6 L23.2 48.8 L22 51.2 L20 52.8 L26.3 52.9 L26.3 53.9 L21 54.2 L18.5 56 L13.5 57.4 L10 56.8 L8.5 53 Z" fill="#0a8cff"/>
<path d="M10.8 56.8 L7.2 61.2 L8.6 62 L12.6 57.4 Z" fill="#8a8ee0"/>
<!-- title/menu buttons -->
<g>
<rect x="569" y="1" width="9" height="8" fill="#c8c8c8"/><path d="M569.5 8.5 L569.5 1.5 L577.5 1.5" stroke="#fff" fill="none"/><path d="M569.5 8.5 L577.5 8.5 L577.5 1.5" stroke="#404040" fill="none"/>
<rect x="571" y="6" width="4" height="1.5" fill="#101060"/>
<rect x="579" y="1" width="9" height="8" fill="#c8c8c8"/><path d="M579.5 8.5 L579.5 1.5 L587.5 1.5" stroke="#fff" fill="none"/><path d="M579.5 8.5 L587.5 8.5 L587.5 1.5" stroke="#404040" fill="none"/>
<rect x="582.5" y="2.5" width="3" height="3" fill="none" stroke="#101060" stroke-width="1"/><rect x="580.8" y="4.2" width="3" height="3" fill="#c8c8c8" stroke="#101060" stroke-width="1"/>
<rect x="589" y="1" width="10" height="8" fill="#c8c8c8"/><path d="M589.5 8.5 L589.5 1.5 L598.5 1.5" stroke="#fff" fill="none"/><path d="M589.5 8.5 L598.5 8.5 L598.5 1.5" stroke="#404040" fill="none"/>
<path d="M591.5 2.8 L596 7.2 M596 2.8 L591.5 7.2" stroke="#000" stroke-width="1.1"/>
<rect x="569" y="12" width="9" height="8" fill="#c8c8c8"/><path d="M569.5 19.5 L569.5 12.5 L577.5 12.5" stroke="#fff" fill="none"/><path d="M569.5 19.5 L577.5 19.5 L577.5 12.5" stroke="#404040" fill="none"/>
<rect x="571" y="17" width="4" height="1" fill="#202020"/>
<rect x="579" y="12" width="9" height="8" fill="#c8c8c8"/><path d="M579.5 19.5 L579.5 12.5 L587.5 12.5" stroke="#fff" fill="none"/><path d="M579.5 19.5 L587.5 19.5 L587.5 12.5" stroke="#404040" fill="none"/>
<rect x="582.5" y="13.5" width="3" height="3" fill="none" stroke="#101030" stroke-width="1"/><rect x="580.8" y="15.2" width="3" height="3" fill="#c8c8c8" stroke="#101060" stroke-width="1"/>
<rect x="589" y="12" width="10" height="8" fill="#c8c8c8"/><path d="M589.5 19.5 L589.5 12.5 L598.5 12.5" stroke="#fff" fill="none"/><path d="M589.5 19.5 L598.5 19.5 L598.5 12.5" stroke="#404040" fill="none"/>
<path d="M591.5 13.8 L596 18.2 M596 13.8 L591.5 18.2" stroke="#a0a0a0" stroke-width="1"/>
</g>
</svg>

<div style="left:67.50px;top:46.70px;white-space:nowrap;transform-origin:0 0;transform:scaleX(0.8407);font-family:'Liberation Sans',sans-serif;font-size:8.5px;line-height:8.5px;color:#62666e;font-weight:400;-webkit-text-stroke:0.15px #62666e;">SUCHEN = Eingabe machen, danach Return / OK drücken</div>
<div style="left:283.30px;top:46.70px;white-space:nowrap;transform-origin:0 0;transform:scaleX(0.8302);font-family:'Liberation Sans',sans-serif;font-size:8.5px;line-height:8.5px;color:#62666e;font-weight:400;-webkit-text-stroke:0.15px #62666e;">ABBRUCH = <u>ohne</u> Eingabe Return / OK drücken</div>
<div style="left:68.50px;top:60.00px;white-space:nowrap;font-family:'Liberation Sans',sans-serif;font-size:6.2px;line-height:6.2px;color:#62666e;font-weight:400;letter-spacing:0.040px;-webkit-text-stroke:0.1px #62666e;">Tip:&nbsp;&nbsp; den "Suchbegriff" mit Sternchen an- und abführen findet immer die gewünschte Zeichenfolge - egal an welcher Stelle im Feld.</div>
<div style="left:526.70px;top:71.30px;white-space:nowrap;font-family:'Liberation Serif',sans-serif;font-size:8.4px;line-height:8.4px;color:#ff1010;font-weight:700;letter-spacing:0.791px;-webkit-text-stroke:0.45px #ff1010;">BACKSTAGE</div>
<div style="left:33.00px;top:94.60px;white-space:nowrap;font-family:'Liberation Sans',sans-serif;font-size:6.1px;line-height:6.1px;color:#28283a;font-weight:400;letter-spacing:0.094px;">Schlagwort</div>
<div style="left:147.00px;top:94.30px;white-space:nowrap;transform-origin:0 0;transform:scaleX(0.9402);font-family:'Liberation Sans',sans-serif;font-size:6.1px;line-height:6.1px;color:#28283a;font-weight:400;-webkit-text-stroke:0.2px #28283a;">NM/E+/km.</div>
<div style="left:277.30px;top:94.40px;white-space:nowrap;font-family:'Liberation Sans',sans-serif;font-size:6.1px;line-height:6.1px;color:#28283a;font-weight:400;letter-spacing:0.474px;">Code</div>
<div style="left:339.30px;top:94.40px;white-space:nowrap;font-family:'Liberation Sans',sans-serif;font-size:6.1px;line-height:6.1px;color:#28283a;font-weight:400;letter-spacing:0.727px;">Code, alle</div>
<div style="left:45.30px;top:107.40px;white-space:nowrap;font-family:'Liberation Sans',sans-serif;font-size:6.1px;line-height:6.1px;color:#28283a;font-weight:400;letter-spacing:0.364px;">NAME</div>
<div style="left:44.00px;top:118.80px;white-space:nowrap;font-family:'Liberation Sans',sans-serif;font-size:6.1px;line-height:6.1px;color:#28283a;font-weight:400;letter-spacing:0.341px;">Straße</div>
<div style="left:48.80px;top:131.60px;white-space:nowrap;font-family:'Liberation Sans',sans-serif;font-size:6.1px;line-height:6.1px;color:#28283a;font-weight:400;letter-spacing:0.646px;">Land</div>
<div style="left:95.00px;top:131.60px;white-space:nowrap;font-family:'Liberation Sans',sans-serif;font-size:6.1px;line-height:6.1px;color:#28283a;font-weight:400;letter-spacing:0.578px;">Bl</div>
<div style="left:127.70px;top:131.60px;white-space:nowrap;font-family:'Liberation Sans',sans-serif;font-size:6.1px;line-height:6.1px;color:#28283a;font-weight:700;letter-spacing:-0.108px;">PLZ</div>
<div style="left:220.75px;top:131.40px;white-space:nowrap;font-family:'Liberation Sans',sans-serif;font-size:6.1px;line-height:6.1px;color:#28283a;font-weight:400;letter-spacing:0.141px;">Ort</div>
<div style="left:210.00px;top:143.60px;white-space:nowrap;font-family:'Liberation Sans',sans-serif;font-size:6.1px;line-height:6.1px;color:#28283a;font-weight:400;letter-spacing:0.512px;">Bezirk</div>
<div style="left:49.10px;top:155.80px;white-space:nowrap;font-family:'Liberation Sans',sans-serif;font-size:6.1px;line-height:6.1px;color:#28283a;font-weight:400;letter-spacing:0.436px;">Fon1</div>
<div style="left:213.75px;top:155.60px;white-space:nowrap;font-family:'Liberation Sans',sans-serif;font-size:6.1px;line-height:6.1px;color:#28283a;font-weight:400;letter-spacing:0.620px;">Fon2</div>
<div style="left:46.00px;top:168.30px;white-space:nowrap;font-family:'Liberation Sans',sans-serif;font-size:6.1px;line-height:6.1px;color:#28283a;font-weight:400;letter-spacing:0.341px;">Funk1</div>
<div style="left:210.75px;top:167.90px;white-space:nowrap;font-family:'Liberation Sans',sans-serif;font-size:6.1px;line-height:6.1px;color:#28283a;font-weight:400;letter-spacing:0.453px;">Funk2</div>
<div style="left:47.00px;top:180.60px;white-space:nowrap;font-family:'Liberation Sans',sans-serif;font-size:6.1px;line-height:6.1px;color:#28283a;font-weight:400;letter-spacing:0.512px;">Fax 1</div>
<div style="left:222.50px;top:181.10px;white-space:nowrap;font-family:'Liberation Sans',sans-serif;font-size:6.1px;line-height:6.1px;color:#28283a;font-weight:400;letter-spacing:1.062px;">_x</div>
<div style="left:28.50px;top:193.00px;white-space:nowrap;font-family:'Liberation Sans',sans-serif;font-size:6.1px;line-height:6.1px;color:#28283a;font-weight:400;letter-spacing:0.579px;">Anmerkung</div>
<div style="left:11.50px;top:210.10px;white-space:nowrap;font-family:'Liberation Sans',sans-serif;font-size:6.1px;line-height:6.1px;color:#28283a;font-weight:400;letter-spacing:0.553px;">Ansprechpartner</div>
<div style="left:40.80px;top:227.40px;white-space:nowrap;font-family:'Liberation Sans',sans-serif;font-size:6.1px;line-height:6.1px;color:#28283a;font-weight:400;letter-spacing:0.566px;">Bezug1</div>
<div style="left:245.70px;top:227.80px;white-space:nowrap;font-family:'Liberation Sans',sans-serif;font-size:6.1px;line-height:6.1px;color:#28283a;font-weight:400;letter-spacing:0.726px;">Bezug2</div>
<div style="left:40.80px;top:249.60px;white-space:nowrap;font-family:'Liberation Sans',sans-serif;font-size:6.1px;line-height:6.1px;color:#28283a;font-weight:400;letter-spacing:0.566px;">Bezug3</div>
<div style="left:245.70px;top:249.40px;white-space:nowrap;font-family:'Liberation Sans',sans-serif;font-size:6.1px;line-height:6.1px;color:#28283a;font-weight:400;letter-spacing:0.726px;">Bezug4</div>
<div style="left:47.40px;top:238.20px;white-space:nowrap;font-family:'Liberation Sans',sans-serif;font-size:6.1px;line-height:6.1px;color:#28283a;font-weight:400;letter-spacing:0.889px;">ePo1</div>
<div style="left:253.40px;top:237.80px;white-space:nowrap;font-family:'Liberation Sans',sans-serif;font-size:6.1px;line-height:6.1px;color:#28283a;font-weight:400;letter-spacing:0.789px;">ePo2</div>
<div style="left:47.40px;top:261.00px;white-space:nowrap;font-family:'Liberation Sans',sans-serif;font-size:6.1px;line-height:6.1px;color:#28283a;font-weight:400;letter-spacing:0.889px;">ePo3</div>
<div style="left:253.40px;top:260.50px;white-space:nowrap;font-family:'Liberation Sans',sans-serif;font-size:6.1px;line-height:6.1px;color:#28283a;font-weight:400;letter-spacing:0.789px;">ePo4</div>
<div style="left:46.90px;top:271.80px;white-space:nowrap;font-family:'Liberation Sans',sans-serif;font-size:6.1px;line-height:6.1px;color:#28283a;font-weight:400;letter-spacing:0.452px;">ePost</div>
<div style="left:253.40px;top:271.50px;white-space:nowrap;font-family:'Liberation Sans',sans-serif;font-size:6.1px;line-height:6.1px;color:#28283a;font-weight:400;letter-spacing:0.559px;">ePoX</div>
<div style="left:47.40px;top:283.00px;white-space:nowrap;font-family:'Liberation Sans',sans-serif;font-size:6.1px;line-height:6.1px;color:#28283a;font-weight:400;letter-spacing:0.435px;">URL1</div>
<div style="left:47.40px;top:294.60px;white-space:nowrap;font-family:'Liberation Sans',sans-serif;font-size:6.1px;line-height:6.1px;color:#28283a;font-weight:400;letter-spacing:0.435px;">URL2</div>
<div style="left:47.40px;top:306.10px;white-space:nowrap;font-family:'Liberation Sans',sans-serif;font-size:6.1px;line-height:6.1px;color:#28283a;font-weight:400;letter-spacing:0.435px;">URL3</div>
<div style="left:47.40px;top:317.90px;white-space:nowrap;font-family:'Liberation Sans',sans-serif;font-size:6.1px;line-height:6.1px;color:#28283a;font-weight:400;letter-spacing:0.435px;">URL4</div>
<div style="left:47.40px;top:329.50px;white-space:nowrap;font-family:'Liberation Sans',sans-serif;font-size:6.1px;line-height:6.1px;color:#28283a;font-weight:400;letter-spacing:0.211px;">URLX</div>
<div style="left:464.30px;top:93.90px;white-space:nowrap;font-family:'Liberation Sans',sans-serif;font-size:6.1px;line-height:6.1px;color:#28283a;font-weight:400;font-style:italic;letter-spacing:-0.054px;">Marker</div>
<div style="left:527.20px;top:108.70px;white-space:nowrap;font-family:'Liberation Sans',sans-serif;font-size:6.1px;line-height:6.1px;color:#28283a;font-weight:400;font-style:italic;letter-spacing:-0.061px;">Termin</div>
<div style="left:464.00px;top:123.90px;white-space:nowrap;font-family:'Liberation Sans',sans-serif;font-size:6.1px;line-height:6.1px;color:#28283a;font-weight:400;font-style:italic;letter-spacing:0.005px;">Projekt</div>
<div style="left:471.50px;top:140.30px;white-space:nowrap;font-family:'Liberation Sans',sans-serif;font-size:6.1px;line-height:6.1px;color:#28283a;font-weight:400;font-style:italic;letter-spacing:0.068px;">Text</div>
<div style="left:461.30px;top:155.30px;white-space:nowrap;font-family:'Liberation Sans',sans-serif;font-size:6.1px;line-height:6.1px;color:#28283a;font-weight:400;font-style:italic;letter-spacing:0.171px;">Kontakt</div>
<div style="left:466.70px;top:166.20px;white-space:nowrap;font-family:'Liberation Sans',sans-serif;font-size:6.1px;line-height:6.1px;color:#28283a;font-weight:400;font-style:italic;letter-spacing:0.177px;">ePost</div>
<div style="left:520.00px;top:198.30px;white-space:nowrap;font-family:'Liberation Sans',sans-serif;font-size:5.9px;line-height:5.9px;color:#28283a;font-weight:400;letter-spacing:0.810px;">Jahr</div>
<div style="left:562.70px;top:198.30px;white-space:nowrap;font-family:'Liberation Sans',sans-serif;font-size:5.9px;line-height:5.9px;color:#28283a;font-weight:400;letter-spacing:1.781px;">Mj</div>
<div style="left:466.70px;top:207.80px;white-space:nowrap;font-family:'Liberation Sans',sans-serif;font-size:5.9px;line-height:5.9px;color:#28283a;font-weight:400;letter-spacing:0.310px;">Datum</div>
<div style="left:477.30px;top:217.50px;white-space:nowrap;font-family:'Liberation Sans',sans-serif;font-size:5.9px;line-height:5.9px;color:#28283a;font-weight:400;letter-spacing:0.084px;">bis</div>
<div style="left:498.70px;top:240.90px;white-space:nowrap;font-family:'Liberation Sans',sans-serif;font-size:6.1px;line-height:6.1px;color:#28283a;font-weight:400;font-style:italic;letter-spacing:0.078px;">Bildtexte</div>
<div style="left:496.00px;top:254.80px;white-space:nowrap;font-family:'Liberation Sans',sans-serif;font-size:6.1px;line-height:6.1px;color:#28283a;font-weight:400;font-style:italic;letter-spacing:0.132px;">Bildtext A</div>
<div style="left:496.00px;top:265.00px;white-space:nowrap;font-family:'Liberation Sans',sans-serif;font-size:6.1px;line-height:6.1px;color:#28283a;font-weight:400;font-style:italic;letter-spacing:0.106px;">Bildtext B</div>
<div style="left:518.00px;top:299.30px;white-space:nowrap;font-family:'Liberation Sans',sans-serif;font-size:6.1px;line-height:6.1px;color:#28283a;font-weight:400;font-style:italic;letter-spacing:0.087px;">angelegt</div>
<div style="left:515.00px;top:309.70px;white-space:nowrap;font-family:'Liberation Sans',sans-serif;font-size:6.1px;line-height:6.1px;color:#28283a;font-weight:400;font-style:italic;letter-spacing:0.099px;">bearbeitet</div>
<div style="left:500.70px;top:365.70px;white-space:nowrap;font-family:'Liberation Sans',sans-serif;font-size:13.2px;line-height:13.2px;color:#ffffff;font-weight:400;letter-spacing:0.438px;-webkit-text-stroke:0.6px #ffffff;">OK</div>
<div style="left:78.70px;top:342.20px;white-space:nowrap;font-family:'Liberation Sans',sans-serif;font-size:6.2px;line-height:6.2px;color:#555a62;font-weight:400;letter-spacing:-0.077px;-webkit-text-stroke:0.25px #555a62;">Tip:&nbsp;&nbsp; durch Voransetzen des Zeichens = geht Du sicher nur genau die gewünschte Zeichenfolge zu finden. Beispielsweise im Feld</div>
<div style="left:92.50px;top:350.00px;white-space:nowrap;transform-origin:0 0;transform:scaleX(0.9482);font-family:'Liberation Sans',sans-serif;font-size:6.2px;line-height:6.2px;color:#555a62;font-weight:400;-webkit-text-stroke:0.25px #555a62;">Land: Eingabe von "M" findet "M", "MA", "MC", "MEX" und "MG", Eingabe von "=M" findet nur den gewünschten Land Maße "M".</div>
<div style="left:15.50px;top:13.00px;white-space:nowrap;transform-origin:0 0;transform:scaleX(0.8194);font-family:'Liberation Sans',sans-serif;font-size:7.2px;line-height:7.2px;color:#000000;font-weight:400;"><u>F</u>ile</div>
<div style="left:32.00px;top:13.00px;white-space:nowrap;transform-origin:0 0;transform:scaleX(0.8071);font-family:'Liberation Sans',sans-serif;font-size:7.2px;line-height:7.2px;color:#000000;font-weight:400;"><u>E</u>dit</div>
<div style="left:49.00px;top:13.00px;white-space:nowrap;transform-origin:0 0;transform:scaleX(0.8404);font-family:'Liberation Sans',sans-serif;font-size:7.2px;line-height:7.2px;color:#000000;font-weight:400;"><u>V</u>iew</div>
<div style="left:69.50px;top:13.00px;white-space:nowrap;transform-origin:0 0;transform:scaleX(0.8619);font-family:'Liberation Sans',sans-serif;font-size:7.2px;line-height:7.2px;color:#000000;font-weight:400;"><u>I</u>nsert</div>
<div style="left:92.20px;top:13.00px;white-space:nowrap;transform-origin:0 0;transform:scaleX(0.8165);font-family:'Liberation Sans',sans-serif;font-size:7.2px;line-height:7.2px;color:#000000;font-weight:400;">Forma<u>t</u></div>
<div style="left:118.00px;top:13.00px;white-space:nowrap;transform-origin:0 0;transform:scaleX(0.8621);font-family:'Liberation Sans',sans-serif;font-size:7.2px;line-height:7.2px;color:#000000;font-weight:400;"><u>R</u>equests</div>
<div style="left:151.30px;top:13.00px;white-space:nowrap;transform-origin:0 0;transform:scaleX(0.8601);font-family:'Liberation Sans',sans-serif;font-size:7.2px;line-height:7.2px;color:#000000;font-weight:400;">BACKSTAGE GigGuide Connector</div>
<div style="left:253.30px;top:13.00px;white-space:nowrap;transform-origin:0 0;transform:scaleX(0.9383);font-family:'Liberation Sans',sans-serif;font-size:7.2px;line-height:7.2px;color:#000000;font-weight:400;"><u>W</u>indow</div>
<div style="left:283.50px;top:13.00px;white-space:nowrap;transform-origin:0 0;transform:scaleX(0.8786);font-family:'Liberation Sans',sans-serif;font-size:7.2px;line-height:7.2px;color:#000000;font-weight:400;"><u>H</u>elp</div>
<div style="left:12.00px;top:1.80px;white-space:nowrap;transform-origin:0 0;transform:scaleX(0.8596);font-family:'Liberation Sans',sans-serif;font-size:8px;line-height:8px;color:#ffffff;font-weight:700;">Connector - [Connector.bgg]</div>
<div style="left:1.50px;top:424.00px;white-space:nowrap;transform-origin:0 0;transform:scaleX(0.7970);font-family:'Liberation Sans',sans-serif;font-size:7.5px;line-height:7.5px;color:#000000;font-weight:400;">For Help, press F1</div>
<div style="left:4.00px;top:414.30px;white-space:nowrap;transform-origin:0 0;transform:scaleX(0.8110);font-family:'Liberation Sans',sans-serif;font-size:6.8px;line-height:6.8px;color:#484850;font-weight:400;">100</div>
<div style="left:44.00px;top:413.50px;white-space:nowrap;transform-origin:0 0;transform:scaleX(0.8807);font-family:'Liberation Sans',sans-serif;font-size:7px;line-height:7px;color:#000040;font-weight:400;">Find</div>
<div style="left:71.30px;top:364.30px;white-space:nowrap;font-family:'Liberation Sans',sans-serif;font-size:5.5px;line-height:5.5px;color:#62666e;font-weight:400;">&lt;</div>
<div style="left:92.40px;top:363.30px;white-space:nowrap;transform-origin:0 0;transform:scaleX(0.8198);font-family:'Liberation Serif',sans-serif;font-size:6.8px;line-height:6.8px;color:#62666e;font-weight:400;-webkit-text-stroke:0.2px #62666e;">Kleiner als</div>
<div style="left:177.00px;top:364.30px;white-space:nowrap;font-family:'Liberation Sans',sans-serif;font-size:5.6px;line-height:5.6px;color:#62666e;font-weight:400;letter-spacing:0.037px;">UND</div>
<div style="left:197.30px;top:363.30px;white-space:nowrap;transform-origin:0 0;transform:scaleX(0.9029);font-family:'Liberation Serif',sans-serif;font-size:6.8px;line-height:6.8px;color:#62666e;font-weight:400;-webkit-text-stroke:0.2px #62666e;">mehrere Felder eingeben</div>
<div style="left:71.30px;top:371.00px;white-space:nowrap;font-family:'Liberation Sans',sans-serif;font-size:5.5px;line-height:5.5px;color:#62666e;font-weight:400;">&lt;=</div>
<div style="left:92.40px;top:370.00px;white-space:nowrap;transform-origin:0 0;transform:scaleX(0.8443);font-family:'Liberation Serif',sans-serif;font-size:6.8px;line-height:6.8px;color:#62666e;font-weight:400;-webkit-text-stroke:0.2px #62666e;">Kleiner oder gleich</div>
<div style="left:177.00px;top:371.00px;white-space:nowrap;transform-origin:0 0;transform:scaleX(0.9275);font-family:'Liberation Sans',sans-serif;font-size:5.6px;line-height:5.6px;color:#62666e;font-weight:400;">ODER</div>
<div style="left:197.30px;top:370.00px;white-space:nowrap;transform-origin:0 0;transform:scaleX(0.8934);font-family:'Liberation Serif',sans-serif;font-size:6.8px;line-height:6.8px;color:#62666e;font-weight:400;-webkit-text-stroke:0.2px #62666e;">Suchbegriff eingeben</div>
<div style="left:71.30px;top:377.80px;white-space:nowrap;font-family:'Liberation Sans',sans-serif;font-size:5.5px;line-height:5.5px;color:#62666e;font-weight:400;">&gt;</div>
<div style="left:92.40px;top:376.80px;white-space:nowrap;transform-origin:0 0;transform:scaleX(0.8912);font-family:'Liberation Serif',sans-serif;font-size:6.8px;line-height:6.8px;color:#62666e;font-weight:400;-webkit-text-stroke:0.2px #62666e;">Größer als</div>
<div style="left:177.00px;top:377.80px;white-space:nowrap;font-family:'Liberation Sans',sans-serif;font-size:5.6px;line-height:5.6px;color:#62666e;font-weight:400;">!</div>
<div style="left:197.30px;top:376.80px;white-space:nowrap;transform-origin:0 0;transform:scaleX(0.9049);font-family:'Liberation Serif',sans-serif;font-size:6.8px;line-height:6.8px;color:#62666e;font-weight:400;-webkit-text-stroke:0.2px #62666e;">Doppelte Werte</div>
<div style="left:71.30px;top:384.70px;white-space:nowrap;font-family:'Liberation Sans',sans-serif;font-size:5.5px;line-height:5.5px;color:#62666e;font-weight:400;">&gt;=</div>
<div style="left:92.40px;top:383.70px;white-space:nowrap;transform-origin:0 0;transform:scaleX(0.8687);font-family:'Liberation Serif',sans-serif;font-size:6.8px;line-height:6.8px;color:#62666e;font-weight:400;-webkit-text-stroke:0.2px #62666e;">Größer oder gleich</div>
<div style="left:177.00px;top:384.70px;white-space:nowrap;font-family:'Liberation Sans',sans-serif;font-size:5.6px;line-height:5.6px;color:#62666e;font-weight:400;">?</div>
<div style="left:197.30px;top:383.70px;white-space:nowrap;transform-origin:0 0;transform:scaleX(0.8727);font-family:'Liberation Serif',sans-serif;font-size:6.8px;line-height:6.8px;color:#62666e;font-weight:400;-webkit-text-stroke:0.2px #62666e;">Datum oder Uhrzeit ungültig</div>
<div style="left:71.30px;top:391.90px;white-space:nowrap;font-family:'Liberation Sans',sans-serif;font-size:5.5px;line-height:5.5px;color:#62666e;font-weight:400;">=</div>
<div style="left:92.40px;top:390.90px;white-space:nowrap;transform-origin:0 0;transform:scaleX(0.8331);font-family:'Liberation Serif',sans-serif;font-size:6.8px;line-height:6.8px;color:#62666e;font-weight:400;-webkit-text-stroke:0.2px #62666e;">Gleich</div>
<div style="left:177.00px;top:391.90px;white-space:nowrap;font-family:'Liberation Sans',sans-serif;font-size:5.6px;line-height:5.6px;color:#62666e;font-weight:400;">@</div>
<div style="left:197.30px;top:390.90px;white-space:nowrap;transform-origin:0 0;transform:scaleX(0.8901);font-family:'Liberation Serif',sans-serif;font-size:6.8px;line-height:6.8px;color:#62666e;font-weight:400;-webkit-text-stroke:0.2px #62666e;">Ein Zeichen</div>
<div style="left:71.30px;top:398.80px;white-space:nowrap;font-family:'Liberation Sans',sans-serif;font-size:5.5px;line-height:5.5px;color:#62666e;font-weight:400;">==</div>
<div style="left:92.40px;top:397.80px;white-space:nowrap;transform-origin:0 0;transform:scaleX(0.8652);font-family:'Liberation Serif',sans-serif;font-size:6.8px;line-height:6.8px;color:#62666e;font-weight:400;-webkit-text-stroke:0.2px #62666e;">Feldinhaltsübereinstimmung</div>
<div style="left:177.00px;top:398.80px;white-space:nowrap;font-family:'Liberation Sans',sans-serif;font-size:5.6px;line-height:5.6px;color:#62666e;font-weight:400;">*</div>
<div style="left:197.30px;top:397.80px;white-space:nowrap;transform-origin:0 0;transform:scaleX(0.8860);font-family:'Liberation Serif',sans-serif;font-size:6.8px;line-height:6.8px;color:#62666e;font-weight:400;-webkit-text-stroke:0.2px #62666e;">Ein oder mehrere Zeichen</div>
<div style="left:260.80px;top:369.20px;white-space:nowrap;transform-origin:0 0;transform:scaleX(0.7539);font-family:'Liberation Sans',sans-serif;font-size:6.5px;line-height:6.5px;color:#62666e;font-weight:400;">-&gt;</div>
<div style="left:275.00px;top:369.80px;white-space:nowrap;transform-origin:0 0;transform:scaleX(0.9489);font-family:'Liberation Sans',sans-serif;font-size:7px;line-height:7px;color:#101010;font-weight:700;">ODER</div>
<div style="left:303.30px;top:370.00px;white-space:nowrap;transform-origin:0 0;transform:scaleX(0.9092);font-family:'Liberation Serif',sans-serif;font-size:6.8px;line-height:6.8px;color:#62666e;font-weight:400;-webkit-text-stroke:0.2px #62666e;">-Taste drücken,</div>
<div style="left:303.30px;top:377.50px;white-space:nowrap;transform-origin:0 0;transform:scaleX(0.8859);font-family:'Liberation Serif',sans-serif;font-size:6.8px;line-height:6.8px;color:#62666e;font-weight:400;-webkit-text-stroke:0.2px #62666e;">nächsten Suchbegriff</div>
<div style="left:303.30px;top:384.20px;white-space:nowrap;transform-origin:0 0;transform:scaleX(0.8894);font-family:'Liberation Serif',sans-serif;font-size:6.8px;line-height:6.8px;color:#62666e;font-weight:400;-webkit-text-stroke:0.2px #62666e;">eingeben usw.</div>
<div style="left:373.75px;top:368.20px;white-space:nowrap;transform-origin:0 0;transform:scaleX(0.8873);font-family:'Liberation Serif',sans-serif;font-size:6.8px;line-height:6.8px;color:#585c66;font-weight:400;font-style:italic;-webkit-text-stroke:0.1px #585c66;">E-Mail-Adressen suchen:</div>
<div style="left:373.00px;top:375.40px;white-space:nowrap;transform-origin:0 0;transform:scaleX(0.8444);font-family:'Liberation Serif',sans-serif;font-size:6.8px;line-height:6.8px;color:#585c66;font-weight:400;font-style:italic;-webkit-text-stroke:0.1px #585c66;">*&nbsp; in Feld E-Mail eingeben</div>
<div style="left:370.60px;top:382.40px;white-space:nowrap;transform-origin:0 0;transform:scaleX(0.9035);font-family:'Liberation Serif',sans-serif;font-size:6.8px;line-height:6.8px;color:#585c66;font-weight:400;font-style:italic;-webkit-text-stroke:0.1px #585c66;">Internet-Adressen suchen:</div>
<div style="left:377.50px;top:389.40px;white-space:nowrap;transform-origin:0 0;transform:scaleX(0.8596);font-family:'Liberation Serif',sans-serif;font-size:6.8px;line-height:6.8px;color:#585c66;font-weight:400;font-style:italic;-webkit-text-stroke:0.1px #585c66;">*&nbsp; in Feld URL eingeben</div>
</div></body></html>
